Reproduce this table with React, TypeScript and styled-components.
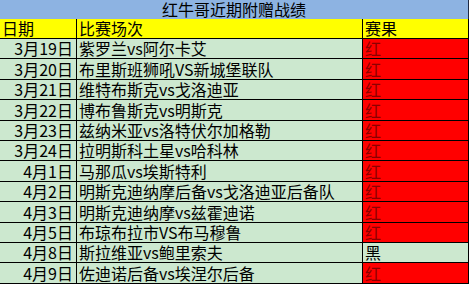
import React from 'react';
import styled, { createGlobalStyle } from 'styled-components';

const GlobalStyle = createGlobalStyle`
  html, body { margin: 0; padding: 0; background: #fff; }
  body { font-family: "Noto Sans CJK SC", "Noto Sans", sans-serif; }
`;

interface Match {
  date: string;
  game: string;
  result: '红' | '黑';
}

const matches: Match[] = [
  { date: '3月19日', game: '紫罗兰vs阿尔卡艾', result: '红' },
  { date: '3月20日', game: '布里斯班狮吼VS新城堡联队', result: '红' },
  { date: '3月21日', game: '维特布斯克vs戈洛迪亚', result: '红' },
  { date: '3月22日', game: '博布鲁斯克vs明斯克', result: '红' },
  { date: '3月23日', game: '兹纳米亚vs洛特伏尔加格勒', result: '红' },
  { date: '3月24日', game: '拉明斯科土星vs哈科林', result: '红' },
  { date: '4月1日', game: '马那瓜vs埃斯特利', result: '红' },
  { date: '4月2日', game: '明斯克迪纳摩后备vs戈洛迪亚后备队', result: '红' },
  { date: '4月3日', game: '明斯克迪纳摩vs兹霍迪诺', result: '红' },
  { date: '4月5日', game: '布琼布拉市VS布马穆鲁', result: '红' },
  { date: '4月8日', game: '斯拉维亚vs鲍里索夫', result: '黑' },
  { date: '4月9日', game: '佐迪诺后备vs埃涅尔后备', result: '红' },
];

const Sheet = styled.div`
  width: 469px;
  display: grid;
  grid-template-columns: 77px 286px 106px;
  font-size: 16px;
  color: #000;
`;

const Title = styled.div`
  grid-column: 1 / 4;
  height: 19px;
  box-sizing: border-box;
  background: #8db3e2;
  border-right: 1px solid #1f2a44;
  display: flex;
  align-items: flex-end;
  justify-content: center;
  line-height: 19px;
  white-space: nowrap;
`;

const Cell = styled.div<{ $bg: string; $h: number; $align?: 'left' | 'right' }>`
  height: ${(p) => p.$h}px;
  box-sizing: border-box;
  background: ${(p) => p.$bg};
  border-right: 1px solid #000;
  border-bottom: 1px solid #000;
  display: flex;
  align-items: flex-end;
  justify-content: ${(p) => (p.$align === 'right' ? 'flex-end' : 'flex-start')};
  padding: 0 3px 0 2px;
  line-height: 19px;
  white-space: nowrap;
`;

const Result = styled.span<{ $red: boolean }>`
  color: ${(p) => (p.$red ? '#8b0000' : '#000')};
`;

const GREEN = '#cce8cf';
const RED = '#ff0000';
const YELLOW = '#ffff00';
const ROW_H = 20.42;

export default function App() {
  return (
    <>
      <GlobalStyle />
      <Sheet>
        <Title>红牛哥近期附赠战绩</Title>
        <Cell $bg={YELLOW} $h={20}>日期</Cell>
        <Cell $bg={YELLOW} $h={20}>比赛场次</Cell>
        <Cell $bg={YELLOW} $h={20}>赛果</Cell>
        {matches.map((m) => (
          <React.Fragment key={m.date}>
            <Cell $bg={GREEN} $h={ROW_H} $align="right">{m.date}</Cell>
            <Cell $bg={GREEN} $h={ROW_H}>{m.game}</Cell>
            <Cell $bg={m.result === '红' ? RED : GREEN} $h={ROW_H}>
              <Result $red={m.result === '红'}>{m.result}</Result>
            </Cell>
          </React.Fragment>
        ))}
      </Sheet>
    </>
  );
}
